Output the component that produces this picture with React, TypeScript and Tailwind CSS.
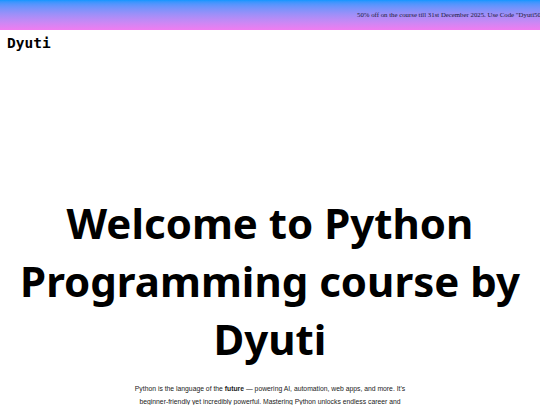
export default function App() {
  return (
    <div className="min-h-screen bg-white">
      <div className="flex h-[30px] items-center overflow-hidden whitespace-nowrap bg-gradient-to-b from-[#0a96ff] to-[#f07cf0]">
        <p className="pl-[357px] text-[6.8px] text-[#1a1a3a] [font-family:'Liberation_Serif',serif]">
          50% off on the course till 31st December 2025. Use Code "Dyuti50" to avail the offer.
        </p>
      </div>
      <header className="px-[7px]">
        <span className="text-[14.5px] font-bold leading-[22px] [font-family:'DejaVu_Sans_Mono',monospace]">
          Dyuti
        </span>
      </header>
      <main className="flex flex-col items-center pt-[140px]">
        <h1 className="text-center text-[42px] font-bold leading-[58px] text-black [font-family:'Noto_Sans',sans-serif]">
          Welcome to Python
          <br />
          Programming course by
          <br />
          Dyuti
        </h1>
        <p className="mt-[14px] w-[274px] text-center text-[6.8px] leading-[13px] text-[#1a1a1a] [font-family:'Liberation_Sans',sans-serif]">
          Python is the language of the <b>future</b> — powering AI, automation, web apps, and more. It's
          beginner-friendly yet incredibly powerful. Mastering Python unlocks endless career and
          opportunities in every industry.
        </p>
      </main>
    </div>
  );
}
